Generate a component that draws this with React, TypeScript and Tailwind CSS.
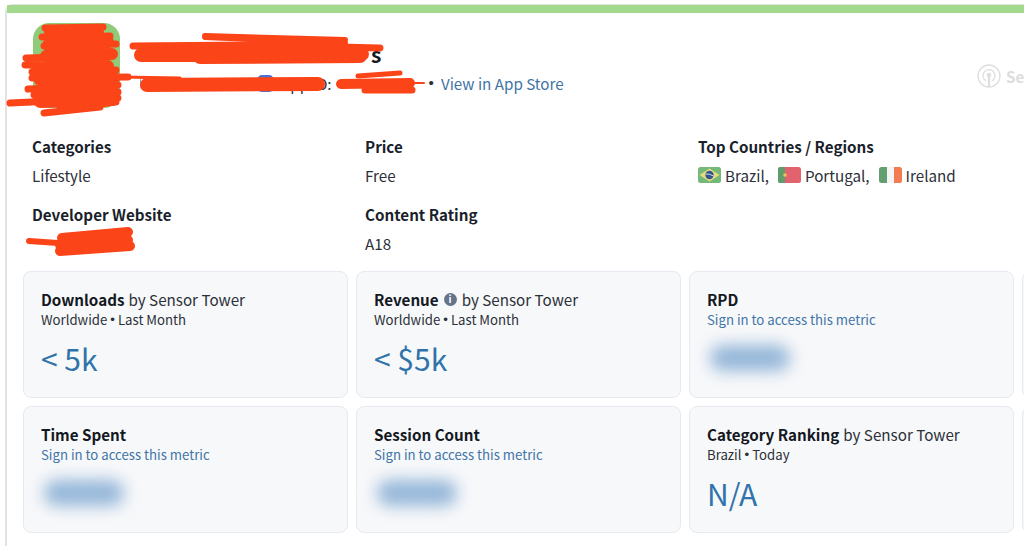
const font = { fontFamily: '"Noto Sans CJK SC", "Noto Sans", sans-serif' };

function Flag({ kind }: { kind: "br" | "pt" | "ie" }) {
  return (
    <svg width="24" height="16" viewBox="0 0 24 16" className="mr-[3px] shrink-0">
      <defs>
        <clipPath id={`flag-${kind}`}>
          <rect width="23" height="16" rx="2.5" />
        </clipPath>
      </defs>
      <g clipPath={`url(#flag-${kind})`}>
        {kind === "br" && (
          <>
            <rect width="23" height="16" fill="#74b87a" />
            <path d="M11.5 1.5 L21.5 8 L11.5 14.5 L1.5 8 Z" fill="#e6dc7c" />
            <circle cx="11.5" cy="8" r="4.2" fill="#34548f" />
            <path d="M7.5 7 Q11.5 6.5 15.5 9" stroke="#e8eef0" strokeWidth="0.9" fill="none" />
          </>
        )}
        {kind === "pt" && (
          <>
            <rect width="23" height="16" fill="#e2636e" />
            <rect width="7" height="16" fill="#5f9c6b" />
            <circle cx="7" cy="8" r="1.8" fill="#e8c65e" />
          </>
        )}
        {kind === "ie" && (
          <>
            <rect width="8" height="16" fill="#649f72" />
            <rect x="8" width="7" height="16" fill="#f5f5f5" />
            <rect x="15" width="8" height="16" fill="#f27b52" />
          </>
        )}
      </g>
    </svg>
  );
}

function Dot() {
  return <span className="mx-[3px] font-['Liberation_Sans']">•</span>;
}

function Info({ label, children }: { label: string; children?: React.ReactNode }) {
  return (
    <div className="h-[68px]">
      <div className="h-6 text-[15.2px] leading-6 font-bold text-[#1a1f2b]">{label}</div>
      <div className="mt-[5px] flex h-6 items-center text-[15.2px] leading-6 text-[#2c3038]">{children}</div>
    </div>
  );
}

function Metric({
  title,
  by,
  info,
  where,
  when,
  value,
}: {
  title: string;
  by?: boolean;
  info?: boolean;
  where?: string;
  when?: string;
  value?: string;
}) {
  return (
    <div className="h-[127px] rounded-lg border border-[#e6e9f0] bg-[#f7f8fa] pt-[15px] pl-[17px]">
      <div className="flex h-6 items-center text-[15.2px] leading-6 whitespace-nowrap text-[#2c3038]">
        <span className="font-bold text-[#14181f]">{title}</span>
        {info && (
          <span className="ml-[5px] flex h-[13px] w-[13px] items-center justify-center rounded-full bg-[#67738a] text-[10px] leading-none font-bold text-white">
            i
          </span>
        )}
        {by && <span className={info ? "ml-[5px]" : "ml-1"}>by Sensor Tower</span>}
      </div>
      {where ? (
        <div className="-mt-[1px] flex h-5 items-center text-[13.2px] leading-5 text-[#2c3038]">
          {where}
          <Dot />
          {when}
        </div>
      ) : (
        <div className="-mt-[1px] h-5 text-[13.2px] leading-5 text-[#3f74a6]">Sign in to access this metric</div>
      )}
      {value ? (
        <div className="mt-[8px] h-10 text-[30px] leading-10 text-[#2f73aa]">{value}</div>
      ) : (
        <div className="mt-[15px] ml-[3px] h-[26px] w-[80px] rounded-full bg-[#94b6d8] blur-[8px]" />
      )}
    </div>
  );
}

export default function App() {
  return (
    <div className="relative h-[546px] w-[1024px] overflow-hidden bg-white" style={font}>
      <div className="mt-[4px] ml-[5px] h-[560px] w-[1060px] rounded-tl-lg border-t border-l-2 border-[#e2e3e3]">
        <div className="h-2 bg-[#a3d98c]" />

        {/* HEADER */}
        <div className="flex h-[121px] pt-[10px] pl-[26px]">
          <div className="h-[85px] w-[87px] shrink-0 rounded-2xl bg-[#8fcb78]" />
          <div className="ml-[20px] flex-1">
            <div className="mt-[19px] flex h-6 items-center text-[21px] font-bold text-[#14181f]">
              <span className="ml-[231px] leading-none">s</span>
            </div>
            <div className="mt-[5px] flex h-6 items-center text-[15.2px] whitespace-nowrap text-[#2c3038]">
              <span className="h-[14px] w-[14px] rounded-sm border border-[#7ea6e0]" />
              <span className="ml-[104px] h-[17px] w-[15px] rounded bg-[#4a73d8]" />
              <span className="ml-[8px]">App ID:</span>
              <span className="ml-[97px] font-['Liberation_Sans']">•</span>
              <span className="ml-[7px] text-[#3f74a6]">View in App Store</span>
            </div>
          </div>
          <div className="mt-[41px] flex h-6 w-[88px] shrink-0 items-center text-[15.2px] font-bold whitespace-nowrap text-[#dddddd]">
            <svg className="shrink-0" width="24" height="24" viewBox="0 0 24 24" fill="none" stroke="#dedede" strokeWidth="1.3" strokeLinecap="round">
              <circle cx="12" cy="12" r="11" />
              <path d="M8.5 16.5 A6 6 0 1 1 15.5 16.5" />
              <path d="M12 12 V22" strokeWidth="2.2" />
              <circle cx="12" cy="11" r="1.6" fill="#dedede" />
            </svg>
            <span className="ml-[5px]">Sensor Tower</span>
          </div>
        </div>

        {/* DETAILS */}
        <div className="grid grid-cols-[333px_333px_333px] pl-[25px]">
          <Info label="Categories">Lifestyle</Info>
          <Info label="Price">Free</Info>
          <Info label="Top Countries / Regions">
            <Flag kind="br" />
            Brazil,
            <span className="w-[9px]" />
            <Flag kind="pt" />
            Portugal,
            <span className="w-[9px]" />
            <Flag kind="ie" />
            Ireland
          </Info>
          <Info label="Developer Website" />
          <Info label="Content Rating">A18</Info>
        </div>

        {/* METRICS */}
        <div className="mt-[1px] grid grid-cols-[325px_325px_325px_325px] gap-x-2 gap-y-2 pl-4">
          <Metric title="Downloads" by where="Worldwide" when="Last Month" value="< 5k" />
          <Metric title="Revenue" by info where="Worldwide" when="Last Month" value="< $5k" />
          <Metric title="RPD" />
          <div className="h-[127px] rounded-lg border border-[#e6e9f0] bg-[#f7f8fa]" />
          <Metric title="Time Spent" />
          <Metric title="Session Count" />
          <Metric title="Category Ranking" by where="Brazil" when="Today" value="N/A" />
          <div className="h-[127px] rounded-lg border border-[#e6e9f0] bg-[#f7f8fa]" />
        </div>
      </div>

      {/* red marker scribbles over the private bits */}
      <svg className="absolute top-0 left-0" width="1024" height="546" fill="none" stroke="#fc4419" strokeLinecap="round" strokeLinejoin="round">
        <path strokeWidth="12" d="M50 33 L98 32 M48 45 L108 42 M46 56 L112 54 M44 68 L108 66 M40 80 L114 78 M42 92 L112 90 M40 102 L112 100" />
        <path
          strokeWidth="7"
          d="M45 28 L103 27 M42 37 L110 36 M44 46 L116 44 M26 58 L108 56 M25 65 L108 64 M32 72 L116 70 M32 78 L128 77 M28 89 L118 85 M34 95 L118 92 M10 103 L118 98 M44 113 L100 107 M60 109 L116 102"
        />
        <path strokeWidth="6" d="M205 36 L345 40 M205 37 L345 43" />
        <path strokeWidth="7" d="M133 46 L250 45 L380 48" />
        <path strokeWidth="14" d="M141 55 L362 54 M200 57 L360 56" />
        <path strokeWidth="3" d="M120 77 L180 78" />
        <path strokeWidth="14" d="M147 85 L318 84" />
        <path strokeWidth="5" d="M358 76 L400 73" />
        <path strokeWidth="10" d="M341 84 L410 83" />
        <path strokeWidth="7" d="M365 90 L412 90" />
        <path strokeWidth="2" d="M400 83 L424 83" />
        <path strokeWidth="6" d="M29 241 L58 243" />
        <path strokeWidth="10" d="M62 238 L128 232 M60 245 L128 240 M60 251 L130 246" />
      </svg>
    </div>
  );
}
